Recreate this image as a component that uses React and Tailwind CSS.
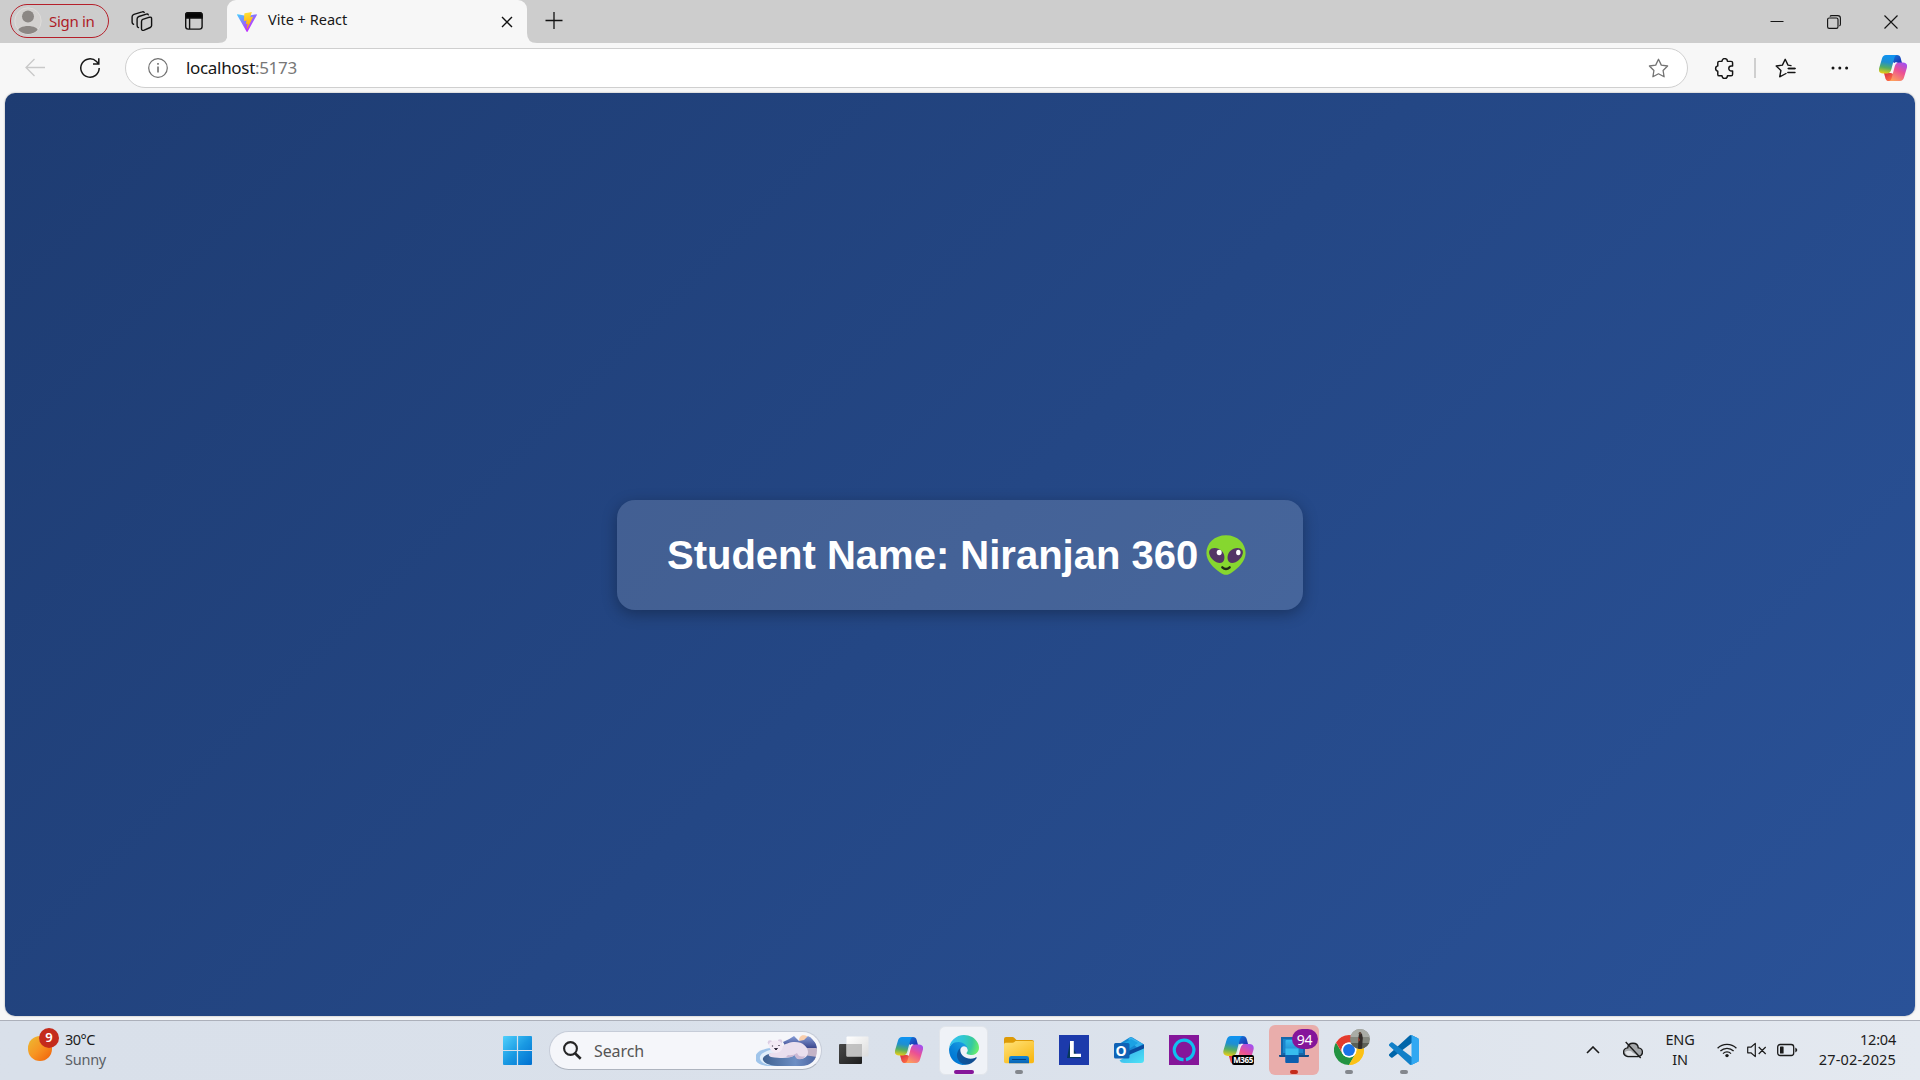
import React from "react";

function CopilotIcon({ id, className }) {
  return (
    <svg viewBox="0 0 28 26" className={className} fill="none">
      <defs>
        <linearGradient id={id + "a"} x1="9" y1="1" x2="6" y2="19" gradientUnits="userSpaceOnUse">
          <stop stopColor="#0f93f0" />
          <stop offset=".35" stopColor="#1f8fd0" />
          <stop offset=".65" stopColor="#55ad62" />
          <stop offset="1" stopColor="#f3cf12" />
        </linearGradient>
        <linearGradient id={id + "b"} x1="23" y1="7" x2="13" y2="25" gradientUnits="userSpaceOnUse">
          <stop stopColor="#a450ee" />
          <stop offset=".45" stopColor="#ec5093" />
          <stop offset="1" stopColor="#fda05c" />
        </linearGradient>
        <linearGradient id={id + "c"} x1="14" y1="0" x2="20" y2="8" gradientUnits="userSpaceOnUse">
          <stop stopColor="#1379d8" />
          <stop offset="1" stopColor="#1b38b5" />
        </linearGradient>
        <linearGradient id={id + "d"} x1="8" y1="18" x2="13" y2="25" gradientUnits="userSpaceOnUse">
          <stop stopColor="#dc3545" />
          <stop offset="1" stopColor="#ff7043" />
        </linearGradient>
      </defs>
      <path d="M13 0h5c2 0 3 .8 3.600 2.800L23 8h-7.500L12 6z" fill={`url(#${id}c)`} />
      <path d="M15 26h-5c-2 0-3-.8-3.600-2.800L5 18h7.500L16 20z" fill={`url(#${id}d)`} />
      <path d="M12.500 18.300L16 7.300h2.500L15 18.500z" fill="#f6f4f8" />
      <path d="M7 0h11c-1.800.5-2.300 1.700-2.800 3.400L12.300 14.500c-.8 2.700-2 4-4.500 4H4c-3.200 0-4.800-2-3.900-5.200L3 3.500C3.600 1.200 4.900 0 7 0z" fill={`url(#${id}a)`} />
      <path d="M21 26H10c1.800-.5 2.300-1.700 2.800-3.400l2.900-11.100c.8-2.700 2-4 4.500-4H24c3.200 0 4.800 2 3.900 5.200L25 22.500c-.6 2.300-1.900 3.500-4 3.500z" fill={`url(#${id}b)`} />
    </svg>
  );
}

function WorkspacesIcon() {
  return (
    <svg viewBox="0 0 22 22" className="h-[22px] w-[22px]" fill="none" stroke="#111" strokeWidth="1.400" strokeLinejoin="round" strokeLinecap="round">
      <path d="M11.800 9.300l6.800-2.100q2-.5 2 1.500v6.800q0 1.400-1.400 2l-6 2.600q-2.700 1-2.700-1.400v-7q0-1.900 1.300-2.400z" />
      <path d="M17.300 4.900q-.4-1.200-2-.7L7.900 6.500Q6.100 7.100 6.100 9v6.200q0 1.900 1.400 2.400" />
      <path d="M13.200 2.500q-.6-1.100-2-.6L2.900 4.300Q1.100 5 1.100 6.800v5.400q0 1.500 1.500 2.100" />
    </svg>
  );
}

function TabActionsIcon() {
  return (
    <svg viewBox="0 0 20 20" className="h-5 w-5" fill="none" stroke="#111" strokeWidth="1.400">
      <rect x="1.700" y="1.700" width="16.400" height="16.400" rx="2.600" />
      <path d="M1.700 7V4.300q0-2.600 2.600-2.600h11.200q2.600 0 2.600 2.600V7z" fill="#050505" />
      <path d="M5.600 7v11" />
    </svg>
  );
}

function ViteIcon() {
  return (
    <svg viewBox="0 0 256 257" className="h-5 w-5">
      <defs>
        <linearGradient id="va" x1="0" x2=".6" y1="0" y2=".8"><stop stopColor="#41D1FF" /><stop offset="1" stopColor="#BD34FE" /></linearGradient>
        <linearGradient id="vb" x1=".4" x2=".5" y1="0" y2=".9"><stop stopColor="#FFEA83" /><stop offset=".083" stopColor="#FFDD35" /><stop offset="1" stopColor="#FFA800" /></linearGradient>
      </defs>
      <path fill="url(#va)" d="M255.153 37.938L134.897 252.976c-2.483 4.440-8.862 4.466-11.382.048L.875 37.958c-2.746-4.814 1.371-10.646 6.827-9.670l120.385 21.517a6.537 6.537 0 0 0 2.322-.004l117.867-21.483c5.438-.991 9.574 4.796 6.877 9.620Z" />
      <path fill="url(#vb)" d="M185.432.063L96.440 17.501a3.268 3.268 0 0 0-2.634 3.014l-5.474 92.456a3.268 3.268 0 0 0 3.997 3.378l24.777-5.718c2.318-.535 4.413 1.507 3.936 3.838l-7.361 36.047c-.495 2.426 1.782 4.500 4.151 3.780l15.304-4.649c2.372-.72 4.652 1.360 4.150 3.788l-11.698 56.621c-.732 3.542 3.979 5.473 5.943 2.437l1.313-2.028l72.516-144.720c1.215-2.423-.88-5.186-3.540-4.672l-25.505 4.922c-2.396.462-4.435-1.770-3.759-4.114l16.646-57.705c.677-2.350-1.370-4.583-3.769-4.113Z" />
    </svg>
  );
}

const STAR = "M10.500 1.300l2.800 5.800 6.300.9-4.500 4.500 1 6.300-5.600-3-5.600 3 1-6.300L1.400 8l6.300-.9z";

function AlienIcon() {
  return (
    <svg viewBox="0 0 40 40" className="h-10 w-10" role="img" aria-label="👽">
      <path d="M20 .2C8.500.2.400 8.200.400 18c0 8.500 7.600 15.200 13.700 19.500 4.200 3.100 7.600 3.100 11.800 0C32 33.200 39.600 26.500 39.600 18 39.600 8.200 31.500.200 20 .200z" fill="#86d72f" />
      <path d="M3.500 15.500C5.500 12 12 12.200 15.800 16c3.200 3.300 3.500 8.500 1 11-2 2-6.500 1-9.700-2-3-2.900-4.900-7-3.600-9.500z" fill="#533566" />
      <path d="M36.500 15.500C34.500 12 28 12.200 24.200 16c-3.200 3.300-3.500 8.500-1 11 2 2 6.500 1 9.700-2 3-2.900 4.900-7 3.600-9.500z" fill="#533566" />
      <ellipse cx="13.200" cy="17.500" rx="2.500" ry="2.700" fill="#fff" />
      <ellipse cx="32.300" cy="17.500" rx="2.200" ry="2.700" fill="#fff" />
      <path d="M16.300 32.300q3.700 3.500 7.400 0" stroke="#202a18" strokeWidth="2.300" strokeLinecap="round" fill="none" />
    </svg>
  );
}

function BearScene() {
  return (
    <svg viewBox="0 0 64 32" className="h-8 w-16">
      <defs>
        <clipPath id="bc"><path d="M2 0h46c8 0 15 6 15 15 0 10-6 16-16 16H2z" /></clipPath>
        <linearGradient id="bw" x1="0" x2="1"><stop stopColor="#3f6190" /><stop offset=".6" stopColor="#6e8fc4" /><stop offset="1" stopColor="#4b62a0" /></linearGradient>
        <linearGradient id="bm" x1="0" x2="0" y1="0" y2="1"><stop stopColor="#8ba3dc" /><stop offset="1" stopColor="#353f87" /></linearGradient>
      </defs>
      <g clipPath="url(#bc)">
        <circle cx="50" cy="5" r="5" fill="#f9cfae" />
        <path d="M29 7q7-3 11-6l5 5 5-1 5-5 9 11v3H33z" fill="url(#bm)" />
        <path d="M36 13h28v12H42z" fill="#c3b3c7" />
        <path d="M17 13C7 14 1 18 1 23c0 4 5 7 12 8h10V16z" fill="#9fc4ea" />
        <path d="M16 15C9 17 5 20 6 24c1 3 4 5 9 6h15V17z" fill="#e1effb" />
        <path d="M20 18c-8 1-12 4-11 7 2 4 8 6 18 6h23c8 0 12-5 13-9l-20-3z" fill="url(#bw)" />
      </g>
      <path d="M28 12c2-3 8-5 13-5 8 0 13 5 13 10 0 4-3 7-8 7-4 0-4-2-5-4-4 3-11 4-24 2-3-1-3-4 0-4l8-1z" fill="#eadfee" />
      <path d="M34 20q5 1 9-2 2 5 8 3-2 4-7 3-3-1-3-4-4 3-9 2z" fill="#cbb9d4" />
      <circle cx="16" cy="7.500" r="2.300" fill="#dccde3" />
      <circle cx="26" cy="6.500" r="2.300" fill="#dccde3" />
      <path d="M15 9c1-4 11-5 13 0 2 5-1 8-6 9-4 0-7-4-7-9z" fill="#f3eaf5" />
      <path d="M20.500 13.500h3l-1.500 1.500z" fill="#352d40" stroke="#352d40" />
      <path d="M18.500 10.500v1M25 10v1" stroke="#352d40" strokeWidth="1.200" />
    </svg>
  );
}

function TaskViewIcon() {
  return (
    <svg viewBox="0 0 30 30" className="h-[30px] w-[30px]">
      <defs>
        <linearGradient id="tv1" x1="0" y1="0" x2="1" y2="1"><stop stopColor="#484848" /><stop offset="1" stopColor="#1d1d1d" /></linearGradient>
        <linearGradient id="tv2" x1="0" y1="0" x2="1" y2="1"><stop stopColor="#fff" /><stop offset="1" stopColor="#dcdcdc" /></linearGradient>
      </defs>
      <rect x="0" y="9" width="23" height="20" rx="1" fill="url(#tv1)" />
      <rect x="7.500" y="1.500" width="22" height="20" rx="1" fill="url(#tv2)" />
      <path d="M7.500 9H23v12.500H7.500z" fill="#b9b9b9" opacity=".85" />
    </svg>
  );
}

function EdgeIcon() {
  return (
    <svg viewBox="0 0 256 256" className="h-[30px] w-[30px]">
      <defs>
        <linearGradient id="e1" x1="63" y1="177" x2="241" y2="177" gradientUnits="userSpaceOnUse"><stop stopColor="#0c59a4" /><stop offset="1" stopColor="#114a8b" /></linearGradient>
        <linearGradient id="e2" x1="157" y1="99" x2="46" y2="220" gradientUnits="userSpaceOnUse"><stop stopColor="#1b9de2" /><stop offset=".16" stopColor="#1595df" /><stop offset=".67" stopColor="#0680d7" /><stop offset="1" stopColor="#0078d4" /></linearGradient>
        <radialGradient id="e3" cx="26" cy="47" r="230" gradientUnits="userSpaceOnUse"><stop stopColor="#35c1f1" /><stop offset=".45" stopColor="#2fc7d0" /><stop offset=".75" stopColor="#36c9a0" /><stop offset="1" stopColor="#66eb6e" /></radialGradient>
      </defs>
      <path fill="url(#e1)" d="M231 190.500c-3.400 1.800-6.900 3.400-10.500 4.700a101.500 101.500 0 0 1-35.800 6.500c-47.100 0-88.200-32.400-88.200-74 .1-11.400 6.400-21.800 16.400-27.300-42.600 1.800-53.600 46.200-53.600 72.200 0 73.500 67.800 81 82.400 81 7.900 0 19.700-2.300 26.900-4.600l1.300-.4a128.300 128.300 0 0 0 66.600-52.800 4 4 0 0 0-5.500-5.300z" />
      <path fill="url(#e2)" d="M105.700 241.400a79.200 79.200 0 0 1-22.700-21.300 80.700 80.700 0 0 1 29.900-119.700c3.200-1.500 8.400-4.100 15.500-4a32.400 32.400 0 0 1 25.700 13 31.900 31.900 0 0 1 6.300 18.700c0-.2 24.500-79.600-80-79.600-43.900 0-80 41.700-80 78.200a130.200 130.200 0 0 0 12.100 56 128 128 0 0 0 156.400 67.100 75.500 75.500 0 0 1-62.800-8z" />
      <path fill="url(#e3)" d="M152.300 148.900c-.9 1-3.400 2.500-3.400 5.600 0 2.600 1.700 5.200 4.800 7.300 14.300 10 41.400 8.600 41.500 8.600a59.600 59.600 0 0 0 30.300-8.300 61.400 61.400 0 0 0 30.400-52.900c.3-22.400-8-37.300-11.300-43.900C223.500 23.900 177.700 0 128 0A128 128 0 0 0 0 126.200c.5-36.500 36.800-66 80-66 3.500 0 23.500.300 42 10.100a72.600 72.600 0 0 1 30.900 29.300c6.100 10.600 7.200 24.100 7.200 29.500s-2.700 13.300-7.800 19.800z" />
    </svg>
  );
}

function FolderIcon() {
  return (
    <svg viewBox="0 0 30 30" className="h-[30px] w-[30px]">
      <defs>
        <linearGradient id="f1" x1="0" y1="0" x2=".7" y2="1"><stop stopColor="#ffe27a" /><stop offset="1" stopColor="#f9b916" /></linearGradient>
        <linearGradient id="f2" x1="0" y1="0" x2="0" y2="1"><stop stopColor="#1286d8" /><stop offset="1" stopColor="#0a64b4" /></linearGradient>
      </defs>
      <path d="M0 4q0-2 2-2h6.500q1 0 1.700.7L12.500 5H28q2 0 2 2v6H0z" fill="#dd9a06" />
      <path d="M0 9.500q0-1.700 1.700-1.700h7q1 0 1.700-.7L11.500 6H28.500Q30 6 30 7.500V26.500q0 1.800-1.800 1.800H1.800Q0 28.300 0 26.500z" fill="url(#f1)" />
      <path d="M5 28.300v-5Q5 21 7.300 21h15.400Q25 21 25 23.300v5z" fill="url(#f2)" />
      <path d="M8.500 24.500h13" stroke="#053f7c" strokeWidth="1.200" strokeLinecap="round" />
    </svg>
  );
}

function LApp() {
  return (
    <svg viewBox="0 0 30 30" className="h-[30px] w-[30px]">
      <path d="M0 0h30v30H0z" fill="#1c3aab" />
      <path d="M11 7L8 23l14 .2-5-5z" fill="#07385b" />
      <path d="M11 6h3.800v12.700H22V22H11z" fill="#fff" />
    </svg>
  );
}

function OutlookIcon() {
  return (
    <div className="relative h-[30px] w-[30px]">
      <svg viewBox="0 0 30 30" className="h-[30px] w-[30px]">
        <defs><linearGradient id="o1" x1="0" y1="0" x2="1" y2="1"><stop stopColor="#32a9e7" /><stop offset="1" stopColor="#4fe4f7" /></linearGradient></defs>
        <path d="M5 9L15.500 2.500q1.500-1 3 0L30 9.500v5L18 21 5 17z" fill="#1687d2" />
        <path d="M14 4l3-1.800L29 9l-6 3.500z" fill="#35b2ed" />
        <path d="M8 9.500l9-5.500 7 4-12 8z" fill="#1ba2e4" />
        <path d="M30 9.500v4L16 22l-4-5z" fill="#0a4b9e" />
        <path d="M30 13.500V25q0 3-3 3H10q-3 0-4.500-2.500L17 19z" fill="url(#o1)" />
        <rect x="0" y="8" width="15.500" height="15.500" rx="1.500" fill="#0f62b6" />
      </svg>
      <span className="absolute top-[8px] left-0 w-[15px] text-center text-[14px] leading-[15px] font-bold text-white">O</span>
    </div>
  );
}

function AlexaIcon() {
  return (
    <svg viewBox="0 0 30 30" className="h-[30px] w-[30px]" fill="none">
      <path d="M0 0h30v30H0z" fill="#85169a" />
      <path d="M13.800 24.700A9.800 9.800 0 1 1 17 24.600" stroke="#10bff0" strokeWidth="3.200" />
      <path d="M10 23.500L14.500 23v3.200Q12 26.300 10 23.500z" fill="#10bff0" />
    </svg>
  );
}

function M365Icon() {
  return (
    <div className="relative h-[30px] w-[31px]">
      <CopilotIcon id="m" className="mt-[1px] h-[28px] w-[31px]" />
      <span className="absolute top-[20px] left-[9px] flex h-[10px] w-[22px] items-center justify-center rounded-[2px] bg-black text-[8px] leading-none font-bold tracking-[-0.4px] text-white">M365</span>
    </div>
  );
}

function PhoneLinkIcon() {
  return (
    <svg viewBox="0 0 30 30" className="h-[30px] w-[30px]">
      <defs><linearGradient id="p1" x1="0" y1="0" x2="0" y2="1"><stop stopColor="#37baf0" /><stop offset="1" stopColor="#0a5fb1" /></linearGradient></defs>
      <path d="M2 2h24v18H2z" fill="#1567ab" />
      <path d="M4 4h20v14H4z" fill="#1a86cd" />
      <path d="M0 20h30v1q0 1-1 1H1q-1 0-1-1z" fill="#134d87" />
      <path d="M7.500 5h11q1 0 1 1v21q0 1-1 1h-11q-1 0-1-1V6q0-1 1-1z" fill="url(#p1)" />
      <path d="M6.500 13.500h13V20h-13z" fill="#38bced" />
      <path d="M6.500 20h13v7q0 1-1 1h-11q-1 0-1-1z" fill="#0b5faf" />
    </svg>
  );
}

function ChromeIcon() {
  return (
    <svg viewBox="0 0 48 48" className="h-[30px] w-[30px]">
      <circle cx="24" cy="24" r="24" fill="#fff" />
      <path d="M3.220 36A24 24 0 0 1 3.220 12L13.600 30A12 12 0 0 0 24 36L24 48A24 24 0 0 1 3.220 36z" fill="#229342" />
      <path d="M24 48A24 24 0 0 0 44.780 12H24A12 12 0 0 1 34.400 30z" fill="#fbc116" />
      <path d="M3.220 12A24 24 0 0 1 44.780 12H24A12 12 0 0 0 13.600 30z" fill="#e33b2e" />
      <path d="M13.600 30L24 48L34.400 30A12 12 0 0 1 13.600 30z" fill="#229342" />
      <path d="M24 48L34.400 30 36 24 44.780 12A24 24 0 0 1 24 48z" fill="#fbc116" />
      <circle cx="24" cy="24" r="12" fill="#fff" />
      <circle cx="24" cy="24" r="9.500" fill="#1a73e8" />
    </svg>
  );
}

function ProfilePhoto() {
  return (
    <svg viewBox="0 0 20 20" className="h-5 w-5">
      <defs><clipPath id="pp"><circle cx="10" cy="10" r="10" /></clipPath></defs>
      <g clipPath="url(#pp)">
        <path d="M0 0h20v20H0z" fill="#85887f" />
        <path d="M0 0h20v8H0z" fill="#a9aca6" />
        <path d="M0 14h20v6H0z" fill="#5c5f56" />
        <path d="M8.500 8l.5-3 1.500-1 1.500 1 .8 4L12 20H8z" fill="#322c29" />
        <circle cx="10" cy="4.200" r="1.300" fill="#5d473b" />
        <path d="M8.300 8l1.700 3-1.500 2z" fill="#a94534" />
      </g>
    </svg>
  );
}

function VSCodeIcon() {
  return (
    <svg viewBox="0 0 100 100" className="h-[30px] w-[30px]">
      <path d="M96.500 10.700L75.900.8a6.200 6.200 0 0 0-7.100 1.200L1.300 63.600a4.200 4.200 0 0 0 0 6.200l5.500 5a4.200 4.200 0 0 0 5.300.2L93.400 13.400a4.100 4.100 0 0 1 6.600 3.300v-.3a6.200 6.200 0 0 0-3.500-5.700z" fill="#0065a9" />
      <path d="M96.500 89.300L75.900 99.200a6.200 6.200 0 0 1-7.100-1.200L1.300 36.400a4.200 4.200 0 0 1 0-6.200l5.500-5a4.200 4.200 0 0 1 5.300-.2l81.300 61.600a4.100 4.100 0 0 0 6.600-3.300v.3a6.200 6.200 0 0 1-3.500 5.700z" fill="#1280c8" />
      <path d="M75.900 99.200a6.200 6.200 0 0 1-7.100-1.200c2.300 2.300 6.200.7 6.200-2.600V4.600c0-3.300-3.900-4.900-6.200-2.600A6.200 6.200 0 0 1 75.900.8l20.600 9.900a6.200 6.200 0 0 1 3.500 5.600v67.400a6.200 6.200 0 0 1-3.500 5.600z" fill="#31a8f2" />
    </svg>
  );
}

function TabStrip() {
  return (
    <div className="flex h-[43px] bg-[#cdcdcd]">
      <div className="mt-[4px] ml-[10px] flex h-[34px] w-[99px] items-center rounded-full border border-[#b5202b] pl-[3px]">
        <svg viewBox="0 0 28 28" className="h-7 w-7">
          <defs><clipPath id="av"><circle cx="14" cy="14" r="13" /></clipPath></defs>
          <circle cx="14" cy="14" r="13.200" fill="#d3d1cf" stroke="#dedcda" />
          <g fill="#8b8784" clipPath="url(#av)"><circle cx="14" cy="9.500" r="6" /><path d="M3.500 28v-3c0-8 21-8 21 0v3z" /></g>
        </svg>
        <span className="ml-[7px] text-[15px] tracking-[-0.3px] whitespace-nowrap text-[#ae1c28]">Sign in</span>
      </div>
      <div className="mt-[10px] ml-[22px]"><WorkspacesIcon /></div>
      <div className="mt-[11px] ml-[31px]"><TabActionsIcon /></div>
      <div className="ml-[14px] flex items-end">
        <svg viewBox="0 0 10 10" className="h-[10px] w-[10px]"><path d="M10 0v10H0Q10 10 10 0z" fill="#f7f7f7" /></svg>
      </div>
      <div className="-ml-px flex w-[300px] items-center rounded-t-[9px] bg-[#f7f7f7] pr-[14px] pl-[10px]">
        <ViteIcon />
        <span className="mb-[3px] ml-[11px] flex-1 text-[14.500px] text-[#181818] tracking-[0px]">Vite + React</span>
        <svg viewBox="0 0 12 12" className="h-3 w-3" stroke="#111" strokeWidth="1.400"><path d="M1 1l10 10M11 1L1 11" /></svg>
      </div>
      <div className="flex items-end">
        <svg viewBox="0 0 10 10" className="h-[10px] w-[10px]"><path d="M0 0v10h10Q0 10 0 0z" fill="#f7f7f7" /></svg>
      </div>
      <svg viewBox="0 0 18 18" className="mt-[12px] ml-[8px] h-[18px] w-[18px]" stroke="#111" strokeWidth="1.300"><path d="M.5 8.500h17M9 0v17" /></svg>
      <div className="mr-[22px] ml-auto flex items-center gap-[43px] text-[#151515]">
        <svg viewBox="0 0 14 14" className="h-[14px] w-[14px]" stroke="currentColor"><path d="M.5 6.500h13" /></svg>
        <svg viewBox="0 0 14 14" className="h-[14px] w-[14px]" fill="none" stroke="currentColor" strokeWidth="1.150"><rect x=".6" y="3" width="10.400" height="10.400" rx="1.600" /><path d="M3 1.600Q3.300.6 4.700.6h6q2.700 0 2.700 2.700v6q0 1.200-1 1.800" /></svg>
        <svg viewBox="0 0 14 14" className="h-[14px] w-[14px]" stroke="currentColor" strokeWidth="1.150"><path d="M.5.5l13 13M13.500.5l-13 13" /></svg>
      </div>
    </div>
  );
}

function Toolbar() {
  return (
    <div className="flex h-[50px] items-center bg-[#f7f7f7]">
      <svg viewBox="0 0 20 20" className="ml-[25px] h-5 w-5" fill="none" stroke="#c9c9c9" strokeWidth="1.300"><path d="M20 9.500H1M9.500 1L1 9.500 9.500 18" /></svg>
      <svg viewBox="0 0 20 20" className="ml-[35px] h-5 w-5" fill="none" stroke="#161616" strokeWidth="1.500"><path d="M19.200 10A9.200 9.200 0 1 1 16.500 3.500L18.600 5.700M18.800 .2V5.900H13" /></svg>
      <div className="ml-[25px] flex h-[40px] w-[1563px] items-center rounded-full border border-[#cfcfcf] bg-white pr-[18px] pl-[22px]">
        <svg viewBox="0 0 20 20" className="h-5 w-5" fill="none" stroke="#707070" strokeWidth="1.200"><circle cx="10" cy="10" r="9.300" /><path d="M10 8.500v6M10 5v1.800" strokeWidth="1.600" /></svg>
        <span className="mb-px ml-[18px] flex-1 text-[17px] tracking-[-0.32px] text-[#161616]">localhost<span className="text-[#777]">:5173</span></span>
        <svg viewBox="0 0 21 20" className="h-5 w-[21px]" fill="none" stroke="#737373" strokeWidth="1.300" strokeLinejoin="round"><path d={STAR} /></svg>
      </div>
      <svg viewBox="0 0 20 20" className="ml-[26px] h-[21px] w-[21px]" fill="none" stroke="#151515" strokeWidth="1.400" strokeLinejoin="round">
        <path d="M4.500 3.200H7.600A2.600 2.600 0 0 1 12.800 3.200H16.300Q17.700 3.200 17.700 4.600V7.600H16.500A2.400 2.400 0 0 0 16.500 12.400H17.700V15.400Q17.700 17 16.300 17H12.800A2.600 2.600 0 0 1 7.600 17H5Q3.600 17 3.600 15.600V12.500A2.550 2.550 0 0 1 3.600 7.500V4.600Q3.600 3.200 5 3.200" />
      </svg>
      <div className="ml-[19px] h-[20px] w-[2px] bg-[#cfcfcf]" />
      <svg viewBox="0 0 21 20" className="ml-[19px] h-5 w-[21px]" fill="none" stroke="#151515" strokeWidth="1.400" strokeLinejoin="round" strokeLinecap="round">
        <path d="M11 15.500l-6.300 3.300 1.200-6.300L1.200 8l6.200-.9 2.800-5.800 2.800 5.800 3 .5M13.200 10.500h6.800M12.800 14.500H20M16.500 6.800" />
        <path d="M13.500 10.500H20" />
      </svg>
      <svg viewBox="0 0 18 4" className="ml-[35px] h-1 w-[18px]" fill="#151515"><circle cx="2" cy="2" r="1.500" /><circle cx="8.800" cy="2" r="1.500" /><circle cx="15.600" cy="2" r="1.500" /></svg>
      <CopilotIcon id="t" className="ml-[30px] h-[26px] w-[28px]" />
    </div>
  );
}

function Slot({ children, mark, tile }) {
  return (
    <div className="flex h-[60px] w-[55px] items-center justify-center">
      <div className={"relative flex items-center justify-center " + (tile || "h-[48px] w-[48px]")}>
        {children}
        {mark && <span className={"absolute left-1/2 h-[4px] -translate-x-1/2 rounded-full " + mark} />}
      </div>
    </div>
  );
}

function Taskbar() {
  return (
    <div className="flex h-[60px] border-t border-[#acb0ba] bg-linear-to-r from-[#d9e0ea] via-[#dae1eb] to-[#e4e9f0] text-[#1c1c1c]">
      <div className="-mt-px flex h-[60px] w-[503px] pl-[28px]">
        <div className="relative mt-[16px] h-[26px] w-[25px]">
          <div className="h-[25px] w-[24px] rounded-full bg-linear-to-br from-[#e9bb33] via-[#f79422] to-[#ee5b05]" />
          <span className="absolute -top-[8px] left-[11px] flex h-[20px] w-[20px] items-center justify-center rounded-full bg-[#c42b1c] text-[13px] font-semibold text-white">9</span>
        </div>
        <div className="mt-[9px] ml-[12px] text-[14.500px] leading-[20px] tracking-[-0.5px]">
          <div>30°C</div>
          <div className="tracking-[-0.25px] text-[#5b5f66]">Sunny</div>
        </div>
      </div>
      <svg viewBox="0 0 29 29" className="mt-[15px] h-[29px] w-[29px]">
        <defs><linearGradient id="win" x1="0" y1="0" x2="29" y2="29" gradientUnits="userSpaceOnUse"><stop stopColor="#50d0fc" /><stop offset=".5" stopColor="#1a9ae3" /><stop offset="1" stopColor="#006fd0" /></linearGradient></defs>
        <path d="M1 0h12.900v13.900H0V1Q0 0 1 0zM15.100 0H28q1 0 1 1v12.900H15.100zM0 15.100h13.900V29H1q-1 0-1-1zM15.100 15.100H29V28q0 1-1 1H15.100z" fill="url(#win)" />
      </svg>
      <div className="mt-[10px] ml-[17px] flex h-[39px] w-[273px] items-center rounded-full border border-[#c6ccd8] border-b-[#aeb4bf] bg-[#f5f6fa] pr-[3px] pl-[13px]">
        <svg viewBox="0 0 19 19" className="h-[19px] w-[19px]" fill="none" stroke="#252525" strokeWidth="2.100"><circle cx="7.500" cy="7.500" r="6.400" /><path d="M12 12.200l5.700 5.500" strokeWidth="2.600" /></svg>
        <span className="ml-[12px] flex-1 text-[16px] tracking-[-0.1px] text-[#555]">Search</span>
        <BearScene />
      </div>
      <div className="-mt-px ml-[4px] flex">
        <Slot><TaskViewIcon /></Slot>
        <Slot><CopilotIcon id="k" className="h-[26px] w-[28px]" /></Slot>
        <Slot tile="h-[49px] w-[49px] rounded-[6px] border border-[#e1e5eb] bg-[#eff2f7]" mark="bottom-0 w-[20px] bg-[#85169a]"><EdgeIcon /></Slot>
        <Slot mark="bottom-0 w-[8px] bg-[#83878d]"><FolderIcon /></Slot>
        <Slot><LApp /></Slot>
        <Slot><OutlookIcon /></Slot>
        <Slot><AlexaIcon /></Slot>
        <Slot><M365Icon /></Slot>
        <Slot tile="h-[50px] w-[50px] rounded-[6px] bg-[#e9adab]" mark="bottom-[1px] w-[8px] bg-[#c42b1c]">
          <PhoneLinkIcon />
          <span className="absolute top-[4px] left-[23px] flex h-[20px] w-[26px] items-center justify-center rounded-full bg-[#85169a] text-[14px] tracking-[-0.3px] text-white">94</span>
        </Slot>
        <Slot mark="bottom-0 w-[8px] bg-[#83878d]">
          <ChromeIcon />
          <span className="absolute top-[3px] left-[25px] leading-none"><ProfilePhoto /></span>
        </Slot>
        <Slot mark="bottom-0 w-[8px] bg-[#83878d]"><VSCodeIcon /></Slot>
      </div>
      <div className="-mt-px mr-[24px] ml-auto flex h-[60px] items-center">
        <svg viewBox="0 0 14 8" className="h-2 w-[14px]" fill="none" stroke="#1b1b1b" strokeWidth="1.600"><path d="M1 7l6-6 6 6" /></svg>
        <svg viewBox="0 0 20 18" className="ml-[23px] h-[18px] w-5" fill="none" stroke="#1b1b1b" strokeWidth="1.400">
          <path d="M5 15.500a4.300 4.300 0 0 1-.3-8.600C5 4 7.200 2.200 10 2.200s5 1.800 5.300 4.700a4.300 4.300 0 0 1-.3 8.600z" fill="#a5a8ab" />
          <path d="M2 11q5-3 8 1l5 2.700H5q-2.500-.7-3-3.700z" fill="#e2e4e7" stroke="none" />
          <path d="M2.700 1l15 16" />
        </svg>
        <div className="mb-[2px] ml-[21px] w-[32px] text-center text-[14.500px] leading-[20px] tracking-[-0.2px]"><div>ENG</div><div>IN</div></div>
        <svg viewBox="0 0 20 16" className="ml-[21px] h-4 w-5" fill="none" stroke="#1b1b1b" strokeWidth="1.300">
          <path d="M.6 6.200a13.300 13.300 0 0 1 18.800 0M3.400 9a9.400 9.400 0 0 1 13.200 0M6 11.600a5.700 5.700 0 0 1 8 0" /><circle cx="10" cy="13.600" r="1.700" fill="#1b1b1b" stroke="none" />
        </svg>
        <svg viewBox="0 0 20 16" className="ml-[10px] h-4 w-5" fill="none" stroke="#1b1b1b" strokeWidth="1.200" strokeLinejoin="round">
          <path d="M.7 5.200h3.200L8.300 1.400v13.200L3.900 10.800H.7zM11.700 5l7 7M18.700 5l-7 7" />
        </svg>
        <svg viewBox="0 0 21 14" className="ml-[10px] h-[14px] w-[21px]" fill="none" stroke="#1b1b1b" strokeWidth="1.300"><rect x=".7" y="1.500" width="16" height="11" rx="2.500" /><path d="M18.300 4.500v5q2-1.200 2-2.500t-2-2.500z" fill="#1b1b1b" stroke="none" /><rect x="3" y="3.500" width="3.600" height="7" rx=".6" fill="#1b1b1b" stroke="none" /></svg>
        <div className="mb-[2px] ml-[20px] w-[78px] text-right text-[14.500px] leading-[20px] whitespace-nowrap"><div className="tracking-[-0.2px]">12:04</div><div className="tracking-[0.15px]">27-02-2025</div></div>
      </div>
    </div>
  );
}

export default function App() {
  return (
    <div className="flex h-[1080px] w-[1920px] flex-col overflow-hidden bg-[#f7f7f7] font-['Noto_Sans','Open_Sans',sans-serif]">
      <TabStrip />
      <Toolbar />
      <main className="mx-[5px] flex h-[923px] items-center justify-center rounded-[10px] bg-[linear-gradient(135deg,#1e3c72,#2a5298)] shadow-[0_0_2px_rgba(0,0,0,0.35)]">
        <div className="flex h-[110px] w-[686px] items-center rounded-[18px] bg-white/15 pl-[50px] shadow-[0_4px_15px_rgba(0,0,0,0.3)]">
          <h1 className="font-['Liberation_Sans',sans-serif] text-[40px] leading-[46px] font-bold whitespace-nowrap text-white">Student Name: Niranjan 360</h1>
          <div className="ml-[8px]"><AlienIcon /></div>
        </div>
      </main>
      <div className="h-[4px]" />
      <Taskbar />
    </div>
  );
}
